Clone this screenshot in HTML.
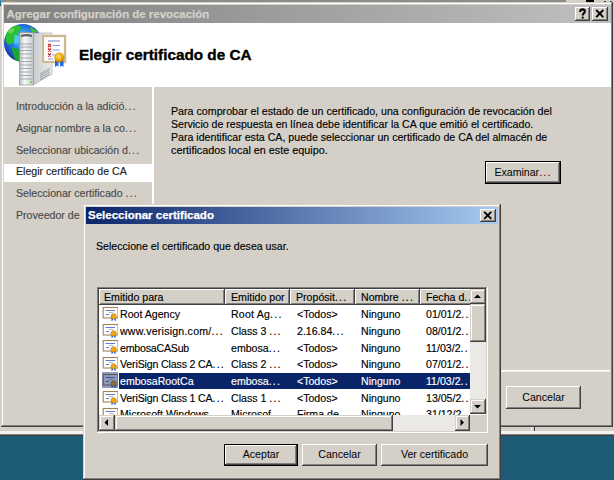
<!DOCTYPE html>
<html><head><meta charset="utf-8">
<style>
html,body{margin:0;padding:0;}
body{width:614px;height:480px;overflow:hidden;position:relative;background:#1e5b77;font-family:"Liberation Sans",sans-serif;font-size:10.6px;color:#000;}
.a{position:absolute;}
.t{position:absolute;white-space:nowrap;line-height:13px;-webkit-text-stroke:0.15px currentColor;}
.face{background:#d4d0c8;}
.win{background:#d4d0c8;box-shadow:inset -1px -1px #404040,inset 1px 1px #d4d0c8,inset -2px -2px #808080,inset 2px 2px #fff;}
.btn{position:absolute;background:#d4d0c8;box-shadow:inset -1px -1px #404040,inset 1px 1px #fff,inset -2px -2px #808080,inset 2px 2px #d4d0c8;text-align:center;line-height:13px;}
.dbtn{position:absolute;background:#d4d0c8;box-shadow:inset -1px -1px #000,inset 1px 1px #000,inset -2px -2px #404040,inset 2px 2px #fff,inset -3px -3px #808080;text-align:center;line-height:13px;}
.cap{position:absolute;width:16px;height:14px;background:#d4d0c8;box-shadow:inset -1px -1px #404040,inset 1px 1px #fff,inset -2px -2px #808080,inset 2px 2px #d4d0c8;}
.el{letter-spacing:1.2px;}
.sunk{background:#fff;box-shadow:inset -1px -1px #fff,inset 1px 1px #808080,inset -2px -2px #d4d0c8,inset 2px 2px #404040;}
.hc{position:absolute;background:#d4d0c8;box-shadow:inset -1px -1px #404040,inset 1px 1px #fff,inset -2px -2px #808080;}
.sb{position:absolute;background:#d4d0c8;box-shadow:inset -1px -1px #404040,inset 1px 1px #d4d0c8,inset -2px -2px #808080,inset 2px 2px #fff;}
.trk{position:absolute;background:#ebe9e5;}
</style></head><body>
<!-- background top strip / behind windows -->
<div class="a" style="left:0;top:0;width:614px;height:436px;background:#d4d0c8;"></div>
<div class="a" style="left:0;top:0;width:614px;height:2px;background:#8c8c8c;"></div>
<div class="a" style="left:566px;top:0;width:48px;height:2px;background:#d4d0c8;"></div>
<div class="a" style="left:586px;top:0;width:8px;height:2px;background:#000;"></div>
<div class="a" style="left:604px;top:1px;width:2px;height:1px;background:#404040;"></div>
<div class="a" style="left:610px;top:1px;width:2px;height:1px;background:#404040;"></div>
<div class="a" style="left:0;top:0;width:1px;height:6px;background:linear-gradient(#3ab0e0,#1c60c8,#18a040,#102080);"></div>
<div class="a" style="left:6px;top:1px;width:8px;height:1px;background:#b0a070;"></div>
<!-- strip below main window -->
<div class="a" style="left:0;top:431px;width:614px;height:3px;background:#f4f3f0;"></div>
<div class="a" style="left:0;top:434px;width:614px;height:1px;background:#808080;"></div>
<div class="a" style="left:0;top:435px;width:614px;height:1px;background:#404040;"></div>

<div class="a" style="left:531px;top:427px;width:1px;height:4px;background:#fff;"></div><div class="a" style="left:534px;top:427px;width:1px;height:4px;background:#404040;"></div>
<!-- MAIN WINDOW -->
<div class="a win" style="left:1px;top:2px;width:612px;height:425px;"></div>
<div class="a" style="left:4px;top:5px;width:607px;height:18px;background:linear-gradient(to right,#808080,#c0c0c0);"></div>
<div class="t" style="left:6.5px;top:8px;font-size:11.45px;font-weight:bold;color:#d4d0c8;-webkit-text-stroke:0.25px #d4d0c8;">Agregar configuración de revocación</div>
<div class="cap" style="left:575px;top:7px;width:15px;"><svg class="a" style="left:0;top:0" width="15" height="14" viewBox="0 0 15 14"><path d="M5.2 4.9 C5.2 3.1 6.2 2.4 7.5 2.4 C8.9 2.4 9.8 3.2 9.8 4.5 C9.8 6.1 7.7 6.4 7.7 8.4" fill="none" stroke="#000" stroke-width="2.1"/><rect x="6.7" y="9.6" width="2" height="2" fill="#000"/></svg></div>
<div class="cap" style="left:592px;top:7px;"><svg class="a" style="left:0;top:0" width="16" height="14" viewBox="0 0 16 14"><path d="M4.2 3 L11.3 10.1 M11.3 3 L4.2 10.1" stroke="#000" stroke-width="1.9"/></svg></div>

<!-- header -->
<div class="a" style="left:4px;top:23px;width:607px;height:64px;background:#fff;"></div>
<svg class="a" style="left:0;top:20px" width="70" height="70" viewBox="0 20 70 70">
<defs>
<radialGradient id="gl" cx="0.5" cy="0.4" r="0.6"><stop offset="0" stop-color="#70e0ff"/><stop offset="0.45" stop-color="#2c88e8"/><stop offset="0.85" stop-color="#1a48c0"/><stop offset="1" stop-color="#10288a"/></radialGradient>
<linearGradient id="sv" x1="0" y1="0" x2="1" y2="0"><stop offset="0" stop-color="#b4b9bc"/><stop offset="0.35" stop-color="#f8f9f9"/><stop offset="1" stop-color="#c4c8ca"/></linearGradient>
<linearGradient id="sd" x1="0" y1="0" x2="1" y2="0"><stop offset="0" stop-color="#c8cacb"/><stop offset="1" stop-color="#eceeee"/></linearGradient>
<radialGradient id="gd" cx="0.4" cy="0.35" r="0.7"><stop offset="0" stop-color="#ffe070"/><stop offset="0.6" stop-color="#f0a800"/><stop offset="1" stop-color="#b87000"/></radialGradient>
</defs>
<circle cx="23" cy="43" r="19" fill="url(#gl)"/>
<path d="M5.5 36 C7 31 10 28 13 26.5 C16 25.5 19 25.5 21 27 C22 29 20 31 18 32 C19 34 18 36 16 38 C15 41 13 43 11 44 C9 45 7 44 6 42Z" fill="#2cc030"/>
<path d="M8 31 C10 29 13 28 15 29 C14 31 12 33 10 34Z" fill="#7ee05a" opacity="0.8"/>
<path d="M12 48 C15 47 18 48 19.5 51 L19.5 61 C17 62 15 60 14 57 C13 54 12 51 12 48Z" fill="#18a830"/>
<path d="M30 27 C33 28 36 30 38 32 L33 33 C31 31 30 29 30 27Z" fill="#40c040"/>
<path d="M14 35 C17 34 19 36 19 40 C18 44 15 45 14 43Z" fill="#58d8ff" opacity="0.6"/>
<!-- server side -->
<path d="M33 33 L52 33 L52 74 L33 85Z" fill="url(#sd)"/>
<path d="M33 33 L52 33 L52 74 L33 85Z" fill="none" stroke="#a0a4a6" stroke-width="0.6"/>
<path d="M40 76 L50 70 M40 78 L50 72 M40 80 L50 74 M40 74 L50 68" stroke="#8a8e90" stroke-width="0.8"/>
<!-- server front -->
<rect x="19.5" y="32.5" width="14" height="52.5" fill="url(#sv)" stroke="#8a9094" stroke-width="0.7"/>
<path d="M21 35 Q26.5 33 32 35 L32 37 Q26.5 35.5 21 37Z" fill="#5a6064"/>
<g stroke="#9aa0a4" stroke-width="0.9">
<path d="M20.5 44 H32.5 M20.5 47 H32.5 M20.5 50.5 H32.5 M20.5 54 H32.5 M20.5 58 H32.5 M20.5 61.5 H32.5 M20.5 65 H32.5 M20.5 68.5 H32.5 M20.5 72 H32.5 M20.5 75.5 H32.5 M20.5 79 H32.5"/>
</g>
<circle cx="31" cy="82" r="1" fill="#50d040"/>
<!-- certificate -->
<rect x="43" y="36" width="22" height="26" fill="#faf6ee" stroke="#c8b890" stroke-width="2"/>
<rect x="41.8" y="34.8" width="24.4" height="28.4" fill="none" stroke="#e6dccb" stroke-width="0.6"/>
<rect x="45.5" y="38.5" width="17" height="21" fill="#fff"/>
<path d="M48 41 H60" stroke="#6a80c8" stroke-width="1"/>
<g stroke="#cc2020" stroke-width="1.3"><path d="M48 44 L51 47 M51 44 L48 47 M48 48.5 L51 51.5 M51 48.5 L48 51.5 M48 53.5 L51 56.5 M51 53.5 L48 56.5"/></g>
<path d="M52.5 45.5 H60 M52.5 50 H60 M52.5 55 H56 M48 59 H53" stroke="#7b90d8" stroke-width="0.9"/>
<path d="M55 60 L55 67 L57 65.5 L58.5 67 L58.5 60Z M60 60 L60 67 L61.8 65.5 L63.5 67 L63.5 60Z" fill="#2068e8"/>
<circle cx="59.3" cy="57.5" r="4.7" fill="url(#gd)" stroke="#c88800" stroke-width="0.5"/>
<circle cx="59.3" cy="57.5" r="1.5" fill="#ffd850" opacity="0.8"/>
</svg>

<div class="t" style="left:79px;top:46px;font-size:15.3px;font-weight:bold;line-height:18px;-webkit-text-stroke:0.35px #000;">Elegir certificado de CA</div>

<!-- nav -->
<div class="a" style="left:152px;top:87px;width:2px;height:338px;background:#fff;"></div>
<div class="a" style="left:4px;top:164px;width:148px;height:18px;background:#fff;"></div>
<div class="t" style="left:16px;top:100px;color:#4a4a4a;">Introducción a la adició<span class="el">...</span></div>
<div class="t" style="left:16px;top:122px;color:#4a4a4a;">Asignar nombre a la co<span class="el">...</span></div>
<div class="t" style="left:16px;top:144px;color:#4a4a4a;">Seleccionar ubicación d<span class="el">...</span></div>
<div class="t" style="left:16px;top:165px;color:#222;">Elegir certificado de CA</div>
<div class="t" style="left:16px;top:187px;color:#4a4a4a;">Seleccionar certificado <span class="el">...</span></div>
<div class="t" style="left:16px;top:209px;color:#4a4a4a;">Proveedor de revocación</div>

<!-- content -->
<div class="t" style="left:171px;top:105px;font-size:10.68px;">Para comprobar el estado de un certificado, una configuración de revocación del</div>
<div class="t" style="left:171px;top:118px;font-size:10.59px;">Servicio de respuesta en línea debe identificar la CA que emitió el certificado.</div>
<div class="t" style="left:171px;top:131px;font-size:10.61px;">Para identificar esta CA, puede seleccionar un certificado de CA del almacén de</div>
<div class="t" style="left:171px;top:144px;font-size:10.8px;">certificados local en este equipo.</div>
<div class="dbtn" style="left:485px;top:161px;width:76px;height:23px;"><span style="position:relative;top:5px;">Examinar<span class="el">...</span></span></div>

<div class="a" style="left:154px;top:370px;width:456px;height:1px;background:#fff;"></div><div class="a" style="left:154px;top:371px;width:456px;height:1px;background:#ecebe7;"></div>
<div class="btn" style="left:506px;top:386px;width:75px;height:23px;"><span style="position:relative;top:5px;">Cancelar</span></div>

<!-- MODAL -->
<div class="a win" style="left:83px;top:204px;width:418px;height:276px;"></div>
<div class="a" style="left:86px;top:207px;width:412px;height:17px;background:linear-gradient(to right,#0a246a,#a6caf0);"></div>
<div class="t" style="left:88px;top:209px;font-size:11.5px;font-weight:bold;color:#fff;-webkit-text-stroke:0.25px #fff;">Seleccionar certificado</div>
<div class="cap" style="left:480px;top:209px;height:13px;"><svg class="a" style="left:0;top:0" width="16" height="13" viewBox="0 0 16 13"><path d="M4.2 2.8 L11.3 9.9 M11.3 2.8 L4.2 9.9" stroke="#000" stroke-width="1.9"/></svg></div>

<div class="t" style="left:96px;top:240px;">Seleccione el certificado que desea usar.</div>

<!-- listview -->
<div class="a sunk" style="left:97px;top:287px;width:391px;height:146px;"></div>
<!--LV-->
<div class="a" style="left:99px;top:289px;width:371px;height:126px;overflow:hidden;">
<div class="hc" style="left:0px;top:0;width:126px;height:16px;"></div>
<div class="t" style="left:5px;top:2px;">Emitido para</div>
<div class="hc" style="left:126px;top:0;width:65px;height:16px;"></div>
<div class="t" style="left:132px;top:2px;">Emitido por</div>
<div class="hc" style="left:191px;top:0;width:65px;height:16px;"></div>
<div class="t" style="left:197px;top:2px;">Propósit<span class="el">...</span></div>
<div class="hc" style="left:256px;top:0;width:65px;height:16px;"></div>
<div class="t" style="left:262px;top:2px;">Nombre <span class="el">...</span></div>
<div class="hc" style="left:321px;top:0;width:57px;height:16px;"></div>
<div class="t" style="left:327px;top:2px;">Fecha d<span class="el">..</span></div>
<svg class="a" style="left:3px;top:16px" width="16" height="16" viewBox="0 0 16 16"><rect x="1.2" y="2.5" width="14.8" height="10.5" fill="#fffef8" stroke="#9c8660" stroke-width="1.1"/><rect x="3.5" y="5.2" width="9.5" height="0.8" fill="#3d5cc8"/><rect x="7" y="7.2" width="4" height="0.7" fill="#8098dc"/><rect x="4" y="9" width="3" height="0.8" fill="#3d5cc8"/><path d="M9.5 12.6 L9.5 16 L10.9 15.3 L10.9 12.6Z M12.2 12.6 L12.2 15.3 L13.6 16 L13.6 12.6Z" fill="#1050e0"/><circle cx="11.6" cy="11.4" r="2.6" fill="#f0a810" stroke="#c88000" stroke-width="0.7"/></svg>
<div class="t" style="left:21px;top:19px;width:108px;overflow:hidden">Root Agency</div>
<div class="t" style="left:132px;top:19px;width:64px;overflow:hidden;letter-spacing:0.2px">Root Ag<span class="el">...</span></div>
<div class="t" style="left:198px;top:19px;width:60px;overflow:hidden">&lt;Todos&gt;</div>
<div class="t" style="left:262px;top:19px;width:62px;overflow:hidden">Ninguno</div>
<div class="t" style="left:327px;top:19px;width:44px;overflow:hidden">01/01/2<span class="el">..</span></div>
<svg class="a" style="left:3px;top:33px" width="16" height="16" viewBox="0 0 16 16"><rect x="1.2" y="2.5" width="14.8" height="10.5" fill="#fffef8" stroke="#9c8660" stroke-width="1.1"/><rect x="3.5" y="5.2" width="9.5" height="0.8" fill="#3d5cc8"/><rect x="7" y="7.2" width="4" height="0.7" fill="#8098dc"/><rect x="4" y="9" width="3" height="0.8" fill="#3d5cc8"/><path d="M9.5 12.6 L9.5 16 L10.9 15.3 L10.9 12.6Z M12.2 12.6 L12.2 15.3 L13.6 16 L13.6 12.6Z" fill="#1050e0"/><circle cx="11.6" cy="11.4" r="2.6" fill="#f0a810" stroke="#c88000" stroke-width="0.7"/></svg>
<div class="t" style="left:21px;top:36px;width:108px;overflow:hidden;letter-spacing:0.22px">www.verisign.com/<span class="el">...</span></div>
<div class="t" style="left:132px;top:36px;width:64px;overflow:hidden">Class 3 <span class="el">...</span></div>
<div class="t" style="left:198px;top:36px;width:60px;overflow:hidden">2.16.84<span class="el">...</span></div>
<div class="t" style="left:262px;top:36px;width:62px;overflow:hidden">Ninguno</div>
<div class="t" style="left:327px;top:36px;width:44px;overflow:hidden">08/01/2<span class="el">..</span></div>
<svg class="a" style="left:3px;top:49px" width="16" height="16" viewBox="0 0 16 16"><rect x="1.2" y="2.5" width="14.8" height="10.5" fill="#fffef8" stroke="#9c8660" stroke-width="1.1"/><rect x="3.5" y="5.2" width="9.5" height="0.8" fill="#3d5cc8"/><rect x="7" y="7.2" width="4" height="0.7" fill="#8098dc"/><rect x="4" y="9" width="3" height="0.8" fill="#3d5cc8"/><path d="M9.5 12.6 L9.5 16 L10.9 15.3 L10.9 12.6Z M12.2 12.6 L12.2 15.3 L13.6 16 L13.6 12.6Z" fill="#1050e0"/><circle cx="11.6" cy="11.4" r="2.6" fill="#f0a810" stroke="#c88000" stroke-width="0.7"/></svg>
<div class="t" style="left:21px;top:53px;width:108px;overflow:hidden;letter-spacing:-0.2px">embosaCASub</div>
<div class="t" style="left:132px;top:53px;width:64px;overflow:hidden">embosa<span class="el">...</span></div>
<div class="t" style="left:198px;top:53px;width:60px;overflow:hidden">&lt;Todos&gt;</div>
<div class="t" style="left:262px;top:53px;width:62px;overflow:hidden">Ninguno</div>
<div class="t" style="left:327px;top:53px;width:44px;overflow:hidden">11/03/2<span class="el">..</span></div>
<svg class="a" style="left:3px;top:66px" width="16" height="16" viewBox="0 0 16 16"><rect x="1.2" y="2.5" width="14.8" height="10.5" fill="#fffef8" stroke="#9c8660" stroke-width="1.1"/><rect x="3.5" y="5.2" width="9.5" height="0.8" fill="#3d5cc8"/><rect x="7" y="7.2" width="4" height="0.7" fill="#8098dc"/><rect x="4" y="9" width="3" height="0.8" fill="#3d5cc8"/><path d="M9.5 12.6 L9.5 16 L10.9 15.3 L10.9 12.6Z M12.2 12.6 L12.2 15.3 L13.6 16 L13.6 12.6Z" fill="#1050e0"/><circle cx="11.6" cy="11.4" r="2.6" fill="#f0a810" stroke="#c88000" stroke-width="0.7"/></svg>
<div class="t" style="left:21px;top:69px;width:108px;overflow:hidden;letter-spacing:-0.15px">VeriSign Class 2 CA<span class="el">...</span></div>
<div class="t" style="left:132px;top:69px;width:64px;overflow:hidden">Class 2 <span class="el">...</span></div>
<div class="t" style="left:198px;top:69px;width:60px;overflow:hidden">&lt;Todos&gt;</div>
<div class="t" style="left:262px;top:69px;width:62px;overflow:hidden">Ninguno</div>
<div class="t" style="left:327px;top:69px;width:44px;overflow:hidden">07/01/2<span class="el">..</span></div>
<div class="a" style="left:20px;top:84px;width:351px;height:16px;background:#0a246a;"></div>
<svg class="a" style="left:3px;top:83px" width="16" height="16" viewBox="0 0 16 16"><rect x="1.2" y="2.5" width="14.8" height="10.5" fill="#fffef8" stroke="#9c8660" stroke-width="1.1"/><rect x="3.5" y="5.2" width="9.5" height="0.8" fill="#3d5cc8"/><rect x="7" y="7.2" width="4" height="0.7" fill="#8098dc"/><rect x="4" y="9" width="3" height="0.8" fill="#3d5cc8"/><path d="M9.5 12.6 L9.5 16 L10.9 15.3 L10.9 12.6Z M12.2 12.6 L12.2 15.3 L13.6 16 L13.6 12.6Z" fill="#1050e0"/><circle cx="11.6" cy="11.4" r="2.6" fill="#f0a810" stroke="#c88000" stroke-width="0.7"/><rect x="0" y="0" width="16" height="16" fill="#0a246a" opacity="0.45"/></svg>
<div class="t" style="left:21px;top:86px;width:108px;overflow:hidden;color:#fff">embosaRootCa</div>
<div class="t" style="left:132px;top:86px;width:64px;overflow:hidden;color:#fff">embosa<span class="el">...</span></div>
<div class="t" style="left:198px;top:86px;width:60px;overflow:hidden;color:#fff">&lt;Todos&gt;</div>
<div class="t" style="left:262px;top:86px;width:62px;overflow:hidden;color:#fff">Ninguno</div>
<div class="t" style="left:327px;top:86px;width:44px;overflow:hidden;color:#fff">11/03/2<span class="el">..</span></div>
<svg class="a" style="left:3px;top:100px" width="16" height="16" viewBox="0 0 16 16"><rect x="1.2" y="2.5" width="14.8" height="10.5" fill="#fffef8" stroke="#9c8660" stroke-width="1.1"/><rect x="3.5" y="5.2" width="9.5" height="0.8" fill="#3d5cc8"/><rect x="7" y="7.2" width="4" height="0.7" fill="#8098dc"/><rect x="4" y="9" width="3" height="0.8" fill="#3d5cc8"/><path d="M9.5 12.6 L9.5 16 L10.9 15.3 L10.9 12.6Z M12.2 12.6 L12.2 15.3 L13.6 16 L13.6 12.6Z" fill="#1050e0"/><circle cx="11.6" cy="11.4" r="2.6" fill="#f0a810" stroke="#c88000" stroke-width="0.7"/></svg>
<div class="t" style="left:21px;top:103px;width:108px;overflow:hidden;letter-spacing:-0.15px">VeriSign Class 1 CA<span class="el">...</span></div>
<div class="t" style="left:132px;top:103px;width:64px;overflow:hidden">Class 1 <span class="el">...</span></div>
<div class="t" style="left:198px;top:103px;width:60px;overflow:hidden">&lt;Todos&gt;</div>
<div class="t" style="left:262px;top:103px;width:62px;overflow:hidden">Ninguno</div>
<div class="t" style="left:327px;top:103px;width:44px;overflow:hidden">13/05/2<span class="el">..</span></div>
<svg class="a" style="left:3px;top:117px" width="16" height="16" viewBox="0 0 16 16"><rect x="1.2" y="2.5" width="14.8" height="10.5" fill="#fffef8" stroke="#9c8660" stroke-width="1.1"/><rect x="3.5" y="5.2" width="9.5" height="0.8" fill="#3d5cc8"/><rect x="7" y="7.2" width="4" height="0.7" fill="#8098dc"/><rect x="4" y="9" width="3" height="0.8" fill="#3d5cc8"/><path d="M9.5 12.6 L9.5 16 L10.9 15.3 L10.9 12.6Z M12.2 12.6 L12.2 15.3 L13.6 16 L13.6 12.6Z" fill="#1050e0"/><circle cx="11.6" cy="11.4" r="2.6" fill="#f0a810" stroke="#c88000" stroke-width="0.7"/></svg>
<div class="t" style="left:21px;top:119px;width:108px;overflow:hidden">Microsoft Windows <span class="el">...</span></div>
<div class="t" style="left:132px;top:119px;width:64px;overflow:hidden">Microsof<span class="el">...</span></div>
<div class="t" style="left:198px;top:119px;width:60px;overflow:hidden">Firma de<span class="el">...</span></div>
<div class="t" style="left:262px;top:119px;width:62px;overflow:hidden">Ninguno</div>
<div class="t" style="left:327px;top:119px;width:44px;overflow:hidden">31/12/2<span class="el">..</span></div>
</div>
<!--/LV-->
<!-- v scroll -->
<div class="trk" style="left:470px;top:289px;width:16px;height:125px;"></div>
<div class="sb" style="left:470px;top:289px;width:16px;height:15px;"><svg class="a" style="left:0;top:0" width="16" height="15"><path d="M4 9 L11 9 L7.5 5.5Z" fill="#000"/></svg></div>
<div class="sb" style="left:470px;top:304px;width:16px;height:38px;"></div>
<div class="sb" style="left:470px;top:399px;width:16px;height:15px;"><svg class="a" style="left:0;top:0" width="16" height="15"><path d="M4 6 L11 6 L7.5 9.5Z" fill="#000"/></svg></div>
<!-- h scroll -->
<div class="trk" style="left:99px;top:415px;width:371px;height:16px;"></div>
<div class="sb" style="left:99px;top:415px;width:16px;height:16px;"><svg class="a" style="left:0;top:0" width="16" height="16"><path d="M9 4 L9 11 L5.5 7.5Z" fill="#000"/></svg></div>
<div class="sb" style="left:115px;top:415px;width:278px;height:16px;"></div>
<div class="sb" style="left:455px;top:415px;width:15px;height:16px;"><svg class="a" style="left:0;top:0" width="15" height="16"><path d="M5.5 4 L5.5 11 L9 7.5Z" fill="#000"/></svg></div>
<div class="a" style="left:470px;top:415px;width:16px;height:16px;background:#d4d0c8;"></div>


<div class="dbtn" style="left:224px;top:444px;width:74px;height:22px;"><span style="position:relative;top:4px;">Aceptar</span></div>
<div class="btn" style="left:302px;top:444px;width:75px;height:22px;"><span style="position:relative;top:4px;">Cancelar</span></div>
<div class="btn" style="left:381px;top:444px;width:107px;height:22px;"><span style="position:relative;top:4px;">Ver certificado</span></div>
</body></html>
